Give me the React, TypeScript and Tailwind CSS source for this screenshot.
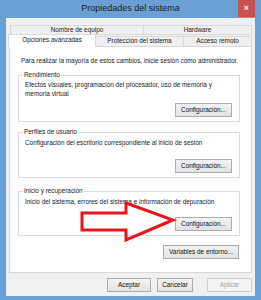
const btn =
  'h-[14px] border border-[#adadad] bg-gradient-to-b from-[#f3f3f3] to-[#e2e2e2] text-[6.4px] leading-none text-[#111] flex items-center justify-center';

function Group({
  label,
  lines,
  height,
  mt,
  pt,
}: {
  label: string;
  lines: string[];
  height: string;
  mt: string;
  pt: string;
}) {
  return (
    <div className={`relative ml-[8px] mr-[11px] border border-[#dcdcdc] flex flex-col ${height} ${mt}`}>
      <span className="absolute -top-[6px] left-[4px] bg-white px-[1px] text-[6.4px] leading-[9px] text-[#222]">
        {label}
      </span>
      <div className={`pl-[6px] ${pt} text-[6.4px] leading-[9px] text-[#1a1a1a]`}>
        {lines.map((l) => (
          <div key={l}>{l}</div>
        ))}
      </div>
      <div className={`${btn} w-[57px] self-end mt-auto mr-[7px] mb-[4px]`}>Configuración...</div>
    </div>
  );
}

export default function App() {
  return (
    <div className="relative w-[261px] h-[300px] bg-[#6a9fd3] overflow-hidden [font-family:'Liberation_Sans',Arial,sans-serif]">
      <div className="h-[18px] flex items-center justify-center text-[9px] text-[#1e1e1e]">
        Propiedades del sistema
      </div>
      <div className="absolute top-0 right-[6px] w-[17px] h-[17px] bg-[#c75050] text-white text-[9px] font-bold flex items-center justify-center">
        ×
      </div>

      <div className="mx-[6px] h-[278px] bg-[#f0f0f0] flex flex-col px-[3px]">
        {/* tabs */}
        <div className="h-[28px] flex flex-col text-[6.4px] leading-none text-[#1a1a1a]">
          <div className="mt-[7px] ml-[1px] flex h-[10px]">
            <div className="w-[134px] border border-[#d9d9d9] bg-[#f0f0f0] flex items-center justify-center">
              Nombre de equipo
            </div>
            <div className="w-[109px] -ml-px border border-[#d9d9d9] bg-[#f0f0f0] flex items-center justify-center">
              Hardware
            </div>
          </div>
          <div className="flex items-end h-[11px]">
            <div className="relative z-10 -ml-[1px] w-[88px] h-[13px] -mb-[1px] bg-white border-x border-t border-[#d9d9d9] flex items-center justify-center pb-[1px]">
              Opciones avanzadas
            </div>
            <div className="w-[89px] -ml-px h-[10px] border border-b-0 border-[#d9d9d9] bg-[#f0f0f0] flex items-center justify-center">
              Protección del sistema
            </div>
            <div className="w-[69px] -ml-px h-[10px] border border-b-0 border-[#d9d9d9] bg-[#f0f0f0] flex items-center justify-center">
              Acceso remoto
            </div>
          </div>
        </div>

        {/* panel */}
        <div className="h-[227px] bg-white border border-[#d9d9d9] flex flex-col">
          <div className="mt-[9px] pl-[11px] text-[6.4px] leading-[9px] text-[#1a1a1a]">
            Para realizar la mayoría de estos cambios, inicie sesión como administrador.
          </div>
          <Group
            label="Rendimiento"
            lines={['Efectos visuales, programación del procesador, uso de memoria y', 'memoria virtual']}
            height="h-[47px]"
            mt="mt-[10px]"
            pt="pt-[4px]"
          />
          <Group
            label="Perfiles de usuario"
            lines={['Configuración del escritorio correspondiente al inicio de sesión']}
            height="h-[46px]"
            mt="mt-[10px]"
            pt="pt-[5px]"
          />
          <Group
            label="Inicio y recuperación"
            lines={['Inicio del sistema, errores del sistema e información de depuración']}
            height="h-[45px]"
            mt="mt-[13px]"
            pt="pt-[5px]"
          />
          <div className={`${btn} w-[76px] self-end mt-[9px] mr-[12px]`}>Variables de entorno...</div>
        </div>

        {/* bottom buttons */}
        <div className="mt-[5px] flex justify-end">
          <div className={`${btn} w-[44px]`}>Aceptar</div>
          <div className={`${btn} w-[36px] ml-[6px]`}>Cancelar</div>
          <div className="h-[14px] w-[45px] ml-[14px] border border-[#cfcfcf] bg-[#f4f4f4] text-[6.4px] leading-none text-[#a3a3a3] flex items-center justify-center">
            Aplicar
          </div>
        </div>
      </div>

      <svg className="absolute inset-0 pointer-events-none" width="261" height="300" viewBox="0 0 261 300">
        <polygon
          points="82,213 126,213 126,203 173,220 126,240 126,230 82,230"
          fill="none"
          stroke="#e8151d"
          strokeWidth="3"
          strokeLinejoin="miter"
        />
      </svg>
    </div>
  );
}
